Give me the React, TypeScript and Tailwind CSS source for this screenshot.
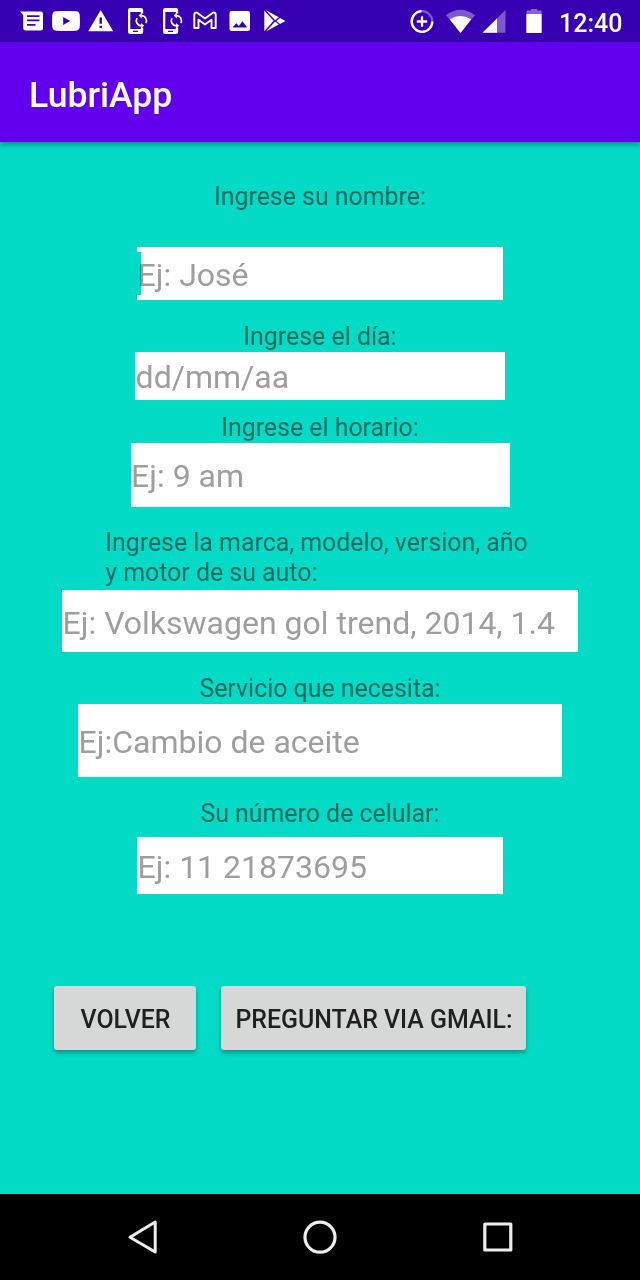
import type { ReactNode } from "react";

function Glyph({ box, className, children }: { box: string; className: string; children: ReactNode }) {
  return (
    <svg viewBox={box} className={`block shrink-0 ${className}`} fill="#fff" aria-hidden="true">
      {children}
    </svg>
  );
}

function PhoneSync({ className }: { className: string }) {
  return (
    <Glyph box="0 0 22 28" className={className}>
      <path
        fillRule="evenodd"
        d="M3.300 1h10.500q2.400 0 2.400 2.200V6.500h-2.400V5H3.300v17h10.500v-1.500h2.400v4.300q0 2.200-2.400 2.200H3.300Q1 27 1 24.800V3.200Q1 1 3.300 1zM6 23.800v1.200h5v-1.200z"
      />
      <g fill="none" stroke="#fff" strokeWidth="1.700">
        <path d="M14.400 8.600a5.100 5.100 0 0 1 4.400 7.600" />
        <path d="M14.400 18.800a5.100 5.100 0 0 1-4.400-7.600" />
      </g>
      <path d="M14.800 5.800v5.600L11.600 8.600zM14 16v5.600l3.200-2.800z" />
    </Glyph>
  );
}

function StatusBar() {
  return (
    <div className="flex h-[42px] items-start bg-[#3700b3]">
      <Glyph box="20 11 23 20" className="mt-[11px] ml-[20px] h-[20px] w-[23px]">
        <path fillRule="evenodd" d="M20 11.500h20.700q2.300 0 2.300 2.200v14.500q0 2.300-2.300 2.300H25.500q-2.300 0-2.300-2.300V15zM27 15.200v1.800h12.500v-1.800zM27 19.500v1.800h12.500v-1.800zM27 24v1.800h8.500V24z" />
      </Glyph>
      <Glyph box="52 11 28 20" className="mt-[11px] ml-[9px] h-[20px] w-[28px]">
        <path fillRule="evenodd" d="M56 11.300q10-.700 20 0 3.400.300 3.700 3.700.500 6 0 12-.300 3.400-3.700 3.700-10 .600-20 0-3.400-.300-3.700-3.700-.500-6 0-12 .300-3.400 3.700-3.700zM63.200 17v8l7-4z" />
      </Glyph>
      <Glyph box="88 10 26 22" className="mt-[10px] ml-[8px] h-[22px] w-[26px]">
        <path fillRule="evenodd" d="M100.700 10l12.500 21.300h-25zM99.500 17.500v6.200h2.400v-6.200zM99.500 25.700v2.400h2.400v-2.400z" />
      </Glyph>
      <PhoneSync className="mt-[7px] ml-[13px] h-[28px] w-[22px]" />
      <PhoneSync className="mt-[7px] ml-[13px] h-[28px] w-[22px]" />
      <Glyph box="192 11 26 20" className="mt-[11px] ml-[8px] h-[20px] w-[26px]">
        <path
          fill="none"
          stroke="#fff"
          strokeWidth="1.900"
          strokeLinejoin="round"
          d="M194.300 15q0-2.700 2.500-2.400l8.200 6 8.200-6q2.500-.300 2.500 2.400v13h-4.200v-8.300l-6.500 4.800-6.500-4.800V28h-4.200z"
        />
      </Glyph>
      <Glyph box="229 11 22 20" className="mt-[11px] ml-[11px] h-[20px] w-[22px]">
        <path fillRule="evenodd" d="M231.700 11h16q2.300 0 2.300 2.200v15.600q0 2.200-2.300 2.200h-16q-2.200 0-2.200-2.200V13.200q0-2.200 2.200-2.200zM232.500 27.500h14.700l-4.700-6.200-3.700 4.600-2.500-2.700z" />
      </Glyph>
      <Glyph box="263 9 24 24" className="mt-[9px] ml-[12px] h-[24px] w-[24px]">
        <path d="M264.300 10.500l9.300 10.300-9.300 10.500zM266 10.300l12.800 6.900-3.700 3zM266 31.600l12.800-7-3.700-3zM280 17.900l5.500 3-5.500 3-3.700-3z" />
      </Glyph>
      <Glyph box="410 9 25 25" className="mt-[9px] ml-[123px] h-[25px] w-[25px]">
        <circle cx="422" cy="21.500" r="10.300" fill="none" stroke="#fff" strokeOpacity=".35" strokeWidth="2.200" />
        <path fill="none" stroke="#fff" strokeWidth="2.300" d="M421.500 11.200A10.300 10.300 0 1 0 432.300 21.500M422 16.300v10.400M416.800 21.500h10.400" />
      </Glyph>
      <Glyph box="446 9 30 25" className="mt-[9px] ml-[11px] h-[25px] w-[30px]">
        <path fillOpacity=".35" d="M446 15.200q14.500-11 29 0L460.500 33z" />
        <path d="M449.800 19.200q10.700-6.200 21.400 0L460.500 33z" />
      </Glyph>
      <Glyph box="482 9 25 25" className="mt-[9px] ml-[6px] h-[25px] w-[25px]">
        <path fillOpacity=".35" d="M505.500 10v22.700h-23z" />
        <path d="M497 18.500v14.200h-14.500z" />
      </Glyph>
      <Glyph box="525 8 18 26" className="mt-[8px] ml-[18px] h-[26px] w-[18px]">
        <path fillOpacity=".4" d="M531 9h6v1.500h4.500v3.500h-15v-3.500H531z" />
        <path d="M526.300 14h15.400v19h-15.400z" />
      </Glyph>
      <span className="mt-[8px] ml-[16px] text-[25px] leading-[31px] font-medium text-white">12:40</span>
    </div>
  );
}

function Label({ className, children }: { className: string; children: ReactNode }) {
  return <div className={`w-max text-[24.900px] leading-[30px] text-[#016b61] ${className}`}>{children}</div>;
}

function Field({ className, hint }: { className: string; hint: string }) {
  return (
    <input
      type="text"
      placeholder={hint}
      aria-label={hint}
      className={`block shrink-0 bg-white pr-0 pb-0 pl-[0.600px] text-[32px] text-black placeholder:text-[#9e9e9e] placeholder:opacity-100 outline-none ${className}`}
    />
  );
}

export default function App() {
  return (
    <div className="flex h-[1280px] w-[640px] flex-col overflow-hidden bg-[#03dbc7] font-['Roboto',sans-serif]">
      <StatusBar />
      <header className="z-10 flex h-[100px] shrink-0 items-center bg-[#6200ee] pt-[6px] pl-[29px] shadow-[0_2px_6px_rgba(0,0,0,0.4)]">
        <h1 className="text-[35.600px] leading-[42px] font-medium text-white">LubriApp</h1>
      </header>
      <main className="flex h-[1052px] shrink-0 flex-col items-center">
        <Label className="mt-[40px]">Ingrese su nombre:</Label>
        <div className="relative mt-[35px]">
          <Field hint="Ej: José" className="h-[53px] w-[366px] pt-[3px]" />
          <span className="absolute top-[5px] left-0 h-[43px] w-[3.500px] bg-[#03dbc7] mix-blend-multiply" />
        </div>
        <Label className="mt-[22px]">Ingrese el día:</Label>
        <Field hint="dd/mm/aa" className="h-[48px] w-[370px] pt-[1px]" />
        <Label className="mt-[13px]">Ingrese el horario:</Label>
        <Field hint="Ej: 9 am" className="h-[64px] w-[379px] pt-[1px]" />
        <Label className="mt-[21px] ml-[-7px]">
          Ingrese la marca, modelo, version, año
          <br />y motor de su auto:
        </Label>
        <Field hint="Ej: Volkswagen gol trend, 2014, 1.4" className="mt-[2px] h-[62px] w-[516px] pt-[3px]" />
        <Label className="mt-[22px]">Servicio que necesita:</Label>
        <Field hint="Ej:Cambio de aceite" className="h-[73px] w-[484px] pt-[3px]" />
        <Label className="mt-[22px]">Su número de celular:</Label>
        <Field hint="Ej: 11 21873695" className="mt-[8px] h-[57px] w-[366px] pt-[3px]" />
        <div className="mt-[92px] flex gap-[25px] self-start pl-[54px]">
          <button className="h-[64px] w-[142px] rounded-[3px] bg-[#d6d7d7] pt-[4px] pl-[1px] text-[24.900px] font-medium text-[#202020] shadow-[0_3px_4px_rgba(0,0,0,0.300)]">
            VOLVER
          </button>
          <button className="h-[64px] w-[305px] rounded-[3px] bg-[#d6d7d7] pt-[4px] pl-[1px] text-[24.900px] font-medium whitespace-nowrap text-[#202020] shadow-[0_3px_4px_rgba(0,0,0,0.300)]">
            PREGUNTAR VIA GMAIL:
          </button>
        </div>
      </main>
      <nav className="flex h-[86px] shrink-0 items-center bg-black pl-[126px]">
        <svg viewBox="0 0 34 36" className="h-[36px] w-[34px]" fill="none" stroke="#ededed" strokeWidth="3" strokeLinejoin="round">
          <path d="M29.200 3v30L4 18.300z" />
        </svg>
        <svg viewBox="0 0 36 36" className="ml-[142px] h-[36px] w-[36px]" fill="none" stroke="#ededed" strokeWidth="3.200">
          <circle cx="18" cy="18.200" r="15" />
        </svg>
        <svg viewBox="0 0 32 32" className="ml-[144px] h-[32px] w-[32px]" fill="none" stroke="#ededed" strokeWidth="3.200" strokeLinejoin="round">
          <path d="M2.800 3h26v26h-26z" />
        </svg>
      </nav>
    </div>
  );
}
